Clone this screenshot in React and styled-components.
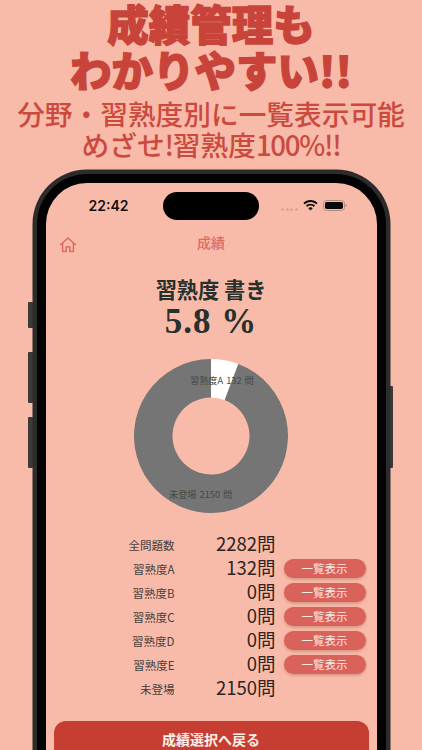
import React from "react";
import styled, { createGlobalStyle } from "styled-components";

const GlobalStyle = createGlobalStyle`
  html, body {
    margin: 0;
    padding: 0;
    height: 750px;
    overflow: hidden;
    background: #f9bba9;
  }
`;

const sans = `"Noto Sans CJK JP", "Noto Sans", sans-serif`;

const Page = styled.div`
  width: 422px;
  height: 750px;
  overflow: hidden;
  background: #f9bba9;
  font-family: ${sans};
  display: flex;
  flex-direction: column;
  align-items: center;
`;

const Headline = styled.h1`
  margin: 0;
  font-size: 41.5px;
  line-height: 46px;
  font-weight: 900;
  color: #c8443a;
  text-align: center;
  -webkit-text-stroke: 1.3px #c8443a;
  white-space: nowrap;
`;

const SubHeadline = styled.p`
  margin: 6px 0 0;
  font-size: 27.7px;
  line-height: 31px;
  font-weight: 500;
  color: #cb4a40;
  text-align: center;
  white-space: nowrap;
`;

const Tight = styled.span`
  letter-spacing: -1.3px;
`;

const PhoneWrap = styled.div`
  position: relative;
  margin-top: 14px;
  width: 349px;
  flex: 1;
`;

const SideButton = styled.span`
  position: absolute;
  width: 5px;
  background: #3c3a39;
  top: ${(p) => p.$top}px;
  height: ${(p) => p.$height}px;
  ${(p) => (p.$right ? "right: -7.5px;" : "left: -9px;")}
  border-radius: 1px;
`;

const Phone = styled.div`
  height: 100%;
  box-sizing: border-box;
  border: 9px solid #030303;
  border-bottom: 0;
  border-radius: 50px 50px 0 0;
  box-shadow: 0 0 0 4.5px #2c2c2c;
  background: #f9bba9;
  display: flex;
  flex-direction: column;
  position: relative;
`;

const StatusBar = styled.div`
  height: 44px;
  flex-shrink: 0;
  display: flex;
  align-items: center;
  padding: 0 30px 0 43px;
  position: relative;
`;

const Clock = styled.span`
  font-family: "Inter", "Liberation Sans", sans-serif;
  font-size: 14px;
  font-weight: 600;
  color: #111;
`;

const Island = styled.div`
  position: absolute;
  left: 117px;
  top: 9px;
  width: 96px;
  height: 28px;
  border-radius: 14px;
  background: #000;
`;

const StatusIcons = styled.div`
  margin-left: auto;
  display: flex;
  align-items: center;
  gap: 5px;
`;

const SignalDots = styled.span`
  display: flex;
  gap: 1.5px;
  margin-top: 8px;
  & > i {
    width: 3px;
    height: 3px;
    border-radius: 50%;
    background: #dba494;
  }
`;

const NavBar = styled.div`
  height: 30px;
  flex-shrink: 0;
  display: flex;
  align-items: center;
  justify-content: center;
  position: relative;
`;

const NavTitle = styled.span`
  font-size: 14px;
  font-weight: 500;
  color: #dd6a62;
`;

const HomeLink = styled.span`
  position: absolute;
  left: 13px;
  top: 9px;
  display: flex;
`;

const ScoreTitle = styled.h2`
  margin: 18px 0 0;
  text-align: center;
  font-size: 21.2px;
  line-height: 28px;
  font-weight: 700;
  color: #27302c;
`;

const ScoreValue = styled.div`
  margin-top: 1px;
  text-align: center;
  font-family: "Liberation Serif", serif;
  font-size: 35px;
  line-height: 36px;
  font-weight: 700;
  color: #27302c;
  letter-spacing: 1px;
`;

const ChartBox = styled.div`
  position: relative;
  width: 154px;
  height: 154px;
  margin: 19px auto 0;
  flex-shrink: 0;
`;

const ChartLabel = styled.span`
  position: absolute;
  left: ${(p) => p.$left}px;
  top: ${(p) => p.$top}px;
  font-size: 9.2px;
  line-height: 12px;
  word-spacing: 1px;
  color: #434a46;
  white-space: nowrap;
`;

const StatsList = styled.div`
  margin-top: 17px;
  display: flex;
  flex-direction: column;
  flex-shrink: 0;
`;

const StatRow = styled.div`
  display: grid;
  grid-template-columns: 130px 92px 82px;
  column-gap: 8px;
  height: 24px;
  align-items: center;
`;

const StatLabel = styled.span`
  font-size: 11.5px;
  padding-right: 1px;
  color: #47403d;
  text-align: right;
`;

const StatValue = styled.span`
  font-size: 18.5px;
  padding-bottom: 3px;
  color: #2b2523;
  text-align: right;
`;

const ListButton = styled.button`
  height: 19px;
  padding: 0;
  border: 0;
  border-radius: 10px;
  background: #d9625b;
  box-shadow: 0 1.5px 3px rgba(120, 50, 40, 0.3);
  color: #fbe9e4;
  font-family: ${sans};
  font-size: 11.5px;
  line-height: 19px;
`;

const BackButton = styled.button`
  margin: 23px 8px 0;
  height: 60px;
  padding: 0 0 24px;
  border: 0;
  border-radius: 12px;
  background: #c53e31;
  color: #fdeee9;
  font-family: ${sans};
  font-size: 14px;
  font-weight: 700;
  flex-shrink: 0;
`;

const stats = [
  { label: "全問題数", value: "2282問" },
  { label: "習熟度A", value: "132問", list: true },
  { label: "習熟度B", value: "0問", list: true },
  { label: "習熟度C", value: "0問", list: true },
  { label: "習熟度D", value: "0問", list: true },
  { label: "習熟度E", value: "0問", list: true },
  { label: "未登場", value: "2150問" },
];

const HomeIcon = () => (
  <svg width="18" height="18" viewBox="0 0 18 18" fill="none" stroke="#dd6a62" strokeWidth="1.5" strokeLinejoin="round" strokeLinecap="round">
    <path d="M1.5 8.8 9 2l7.5 6.8" />
    <path d="M3.6 7.4v8.2h3.6v-4.8h3.6v4.8h3.6V7.4" />
  </svg>
);

const WifiIcon = () => (
  <svg width="15" height="11" viewBox="0 0 15 11" fill="#0a0a0a">
    <path d="M7.5 0C4.7 0 2.2 1.1.4 2.9l1.3 1.4C3.2 2.8 5.2 1.9 7.5 1.9s4.3.9 5.8 2.4l1.3-1.4C12.8 1.1 10.3 0 7.5 0z" />
    <path d="M7.5 3.7c-1.8 0-3.4.7-4.5 1.9l1.3 1.3c.8-.8 2-1.3 3.2-1.3s2.4.5 3.2 1.3L12 5.6c-1.1-1.2-2.7-1.9-4.5-1.9z" />
    <path d="M7.5 7.3c-.9 0-1.6.3-2.2.9L7.5 10.6l2.2-2.4c-.6-.6-1.3-.9-2.2-.9z" />
  </svg>
);

const BatteryIcon = () => (
  <svg width="24" height="11" viewBox="0 0 24 11">
    <rect x="0.5" y="0.5" width="21" height="10" rx="3" fill="none" stroke="#b78a7c" />
    <rect x="2" y="2" width="18" height="7" rx="1.8" fill="#0a0a0a" />
    <path d="M22.5 3.8c.8.3 1.2.9 1.2 1.7s-.4 1.4-1.2 1.7z" fill="#b78a7c" />
  </svg>
);

// ドーナツの扇形
const slicePath = (start, end, r, ir, c) => {
  const pt = (rad, deg) => {
    const a = ((deg - 90) * Math.PI) / 180;
    return `${c + rad * Math.cos(a)} ${c + rad * Math.sin(a)}`;
  };
  const large = end - start > 180 ? 1 : 0;
  return `M${pt(r, start)} A${r} ${r} 0 ${large} 1 ${pt(r, end)} L${pt(ir, end)} A${ir} ${ir} 0 ${large} 0 ${pt(ir, start)} Z`;
};

const Donut = () => (
  <svg width="154" height="154" viewBox="0 0 154 154">
    <path d={slicePath(0, 20.8, 77, 38.5, 77)} fill="#ffffff" />
    <path d={slicePath(20.8, 360, 77, 38.5, 77)} fill="#757575" />
  </svg>
);

const App = () => {
  return (
    <Page>
      <GlobalStyle />
      <Headline>
        成績管理も
        <br />
        わかりやすい!!
      </Headline>
      <SubHeadline>
        分野・習熟度別に一覧表示可能
        <br />
        めざせ<Tight>!</Tight>習熟度<Tight>100%!!</Tight>
      </SubHeadline>
      <PhoneWrap>
        <SideButton $top={128} $height={26} />
        <SideButton $top={178} $height={51} />
        <SideButton $top={243} $height={51} />
        <SideButton $right $top={212} $height={82} />
        <Phone>
          <StatusBar>
            <Clock>22:42</Clock>
            <Island />
            <StatusIcons>
              <SignalDots>
                <i />
                <i />
                <i />
                <i />
              </SignalDots>
              <WifiIcon />
              <BatteryIcon />
            </StatusIcons>
          </StatusBar>
          <NavBar>
            <HomeLink>
              <HomeIcon />
            </HomeLink>
            <NavTitle>成績</NavTitle>
          </NavBar>
          <ScoreTitle>習熟度 書き</ScoreTitle>
          <ScoreValue>5.8 %</ScoreValue>
          <ChartBox>
            <Donut />
            <ChartLabel $left={56} $top={15}>
              習熟度A 132 問
            </ChartLabel>
            <ChartLabel $left={35} $top={129}>
              未登場 2150 問
            </ChartLabel>
          </ChartBox>
          <StatsList>
            {stats.map((s) => (
              <StatRow key={s.label}>
                <StatLabel>{s.label}</StatLabel>
                <StatValue>{s.value}</StatValue>
                {s.list ? <ListButton>一覧表示</ListButton> : <span />}
              </StatRow>
            ))}
          </StatsList>
          <BackButton>成績選択へ戻る</BackButton>
        </Phone>
      </PhoneWrap>
    </Page>
  );
};

export default App;
